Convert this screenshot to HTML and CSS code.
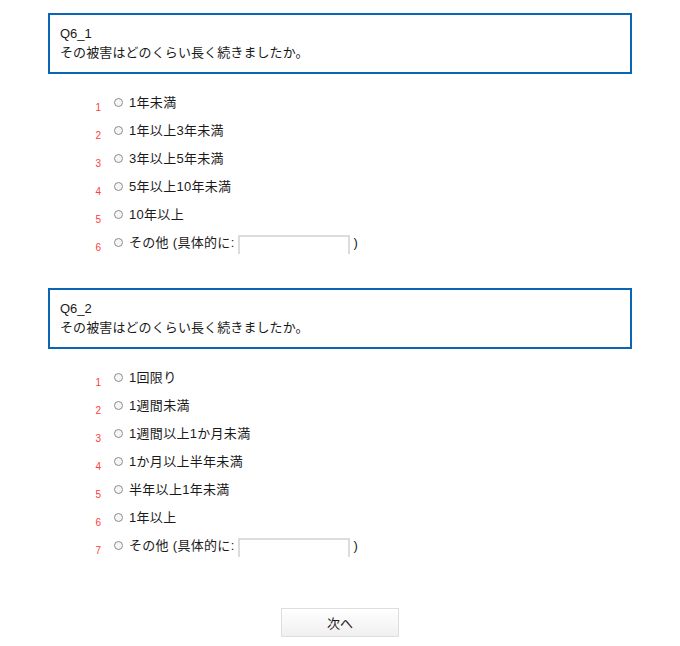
FILE: index.html
```html
<!DOCTYPE html>
<html lang="ja">
<head>
<meta charset="utf-8">
<title>Q6</title>
<link rel="stylesheet" href="styles.css">
</head>
<body>
<div class="page">
  <section class="question">
    <div class="qbox">
      <div class="qid">Q6_1</div>
      <div class="qtext">その被害はどのくらい長く続きましたか。</div>
    </div>
    <ul class="options">
      <li class="opt"><span class="num">1</span><span class="radio"></span><span class="label">1年未満</span></li>
      <li class="opt"><span class="num">2</span><span class="radio"></span><span class="label">1年以上3年未満</span></li>
      <li class="opt"><span class="num">3</span><span class="radio"></span><span class="label">3年以上5年未満</span></li>
      <li class="opt"><span class="num">4</span><span class="radio"></span><span class="label">5年以上10年未満</span></li>
      <li class="opt"><span class="num">5</span><span class="radio"></span><span class="label">10年以上</span></li>
      <li class="opt"><span class="num">6</span><span class="radio"></span><span class="label">その他 (具体的に:</span><span class="field"></span><span class="close">)</span></li>
    </ul>
  </section>
  <section class="question second">
    <div class="qbox">
      <div class="qid">Q6_2</div>
      <div class="qtext">その被害はどのくらい長く続きましたか。</div>
    </div>
    <ul class="options">
      <li class="opt"><span class="num">1</span><span class="radio"></span><span class="label">1回限り</span></li>
      <li class="opt"><span class="num">2</span><span class="radio"></span><span class="label">1週間未満</span></li>
      <li class="opt"><span class="num">3</span><span class="radio"></span><span class="label">1週間以上1か月未満</span></li>
      <li class="opt"><span class="num">4</span><span class="radio"></span><span class="label">1か月以上半年未満</span></li>
      <li class="opt"><span class="num">5</span><span class="radio"></span><span class="label">半年以上1年未満</span></li>
      <li class="opt"><span class="num">6</span><span class="radio"></span><span class="label">1年以上</span></li>
      <li class="opt"><span class="num">7</span><span class="radio"></span><span class="label">その他 (具体的に:</span><span class="field"></span><span class="close">)</span></li>
    </ul>
  </section>
  <div class="actions">
    <button class="next" type="button">次へ</button>
  </div>
</div>
</body>
</html>
```
FILE: styles.css
```css
html, body {
  margin: 0;
  padding: 0;
  background: #ffffff;
}
body {
  font-family: "Liberation Sans", "Noto Sans CJK JP", sans-serif;
  font-size: 13px;
  color: #1a1a1a;
}
.page {
  padding: 13px 48px 0 48px;
}
.question.second {
  margin-top: 31px;
}
.qbox {
  border: 2px solid #0a66b5;
  padding: 9px 10px 10px 10px;
  line-height: 19px;
}
.qtext {
  letter-spacing: 0.1px;
}
.options {
  list-style: none;
  margin: 15px 0 0 0;
  padding: 0 0 0 41px;
}
.opt {
  display: flex;
  align-items: center;
  height: 28px;
}
.num {
  width: 12px;
  text-align: right;
  font-size: 10px;
  line-height: 12px;
  color: #ff3b3b;
  align-self: flex-end;
  margin-bottom: 3px;
}
.radio {
  width: 9px;
  height: 9px;
  box-sizing: border-box;
  border: 1px solid #8c8c8c;
  border-radius: 50%;
  background: #f6f6f6;
  margin-left: 13px;
  margin-top: -2px;
}
.label {
  margin-left: 6px;
  line-height: 19px;
  margin-top: -2px;
  letter-spacing: 0.3px;
}
.field {
  width: 112px;
  height: 19px;
  box-sizing: border-box;
  border: 2px solid #dcdcdc;
  border-bottom: none;
  margin-left: 3px;
  margin-top: 3px;
}
.close {
  margin-left: 4px;
  margin-top: -2px;
}
.actions {
  display: flex;
  justify-content: center;
  margin-top: 48px;
}
.next {
  width: 118px;
  height: 29px;
  border: 1px solid #dedede;
  background: linear-gradient(#ffffff, #f0f0f0);
  font-family: "Liberation Sans", "Noto Sans CJK JP", sans-serif;
  font-size: 13px;
  color: #1a1a1a;
  padding: 0;
}
```
